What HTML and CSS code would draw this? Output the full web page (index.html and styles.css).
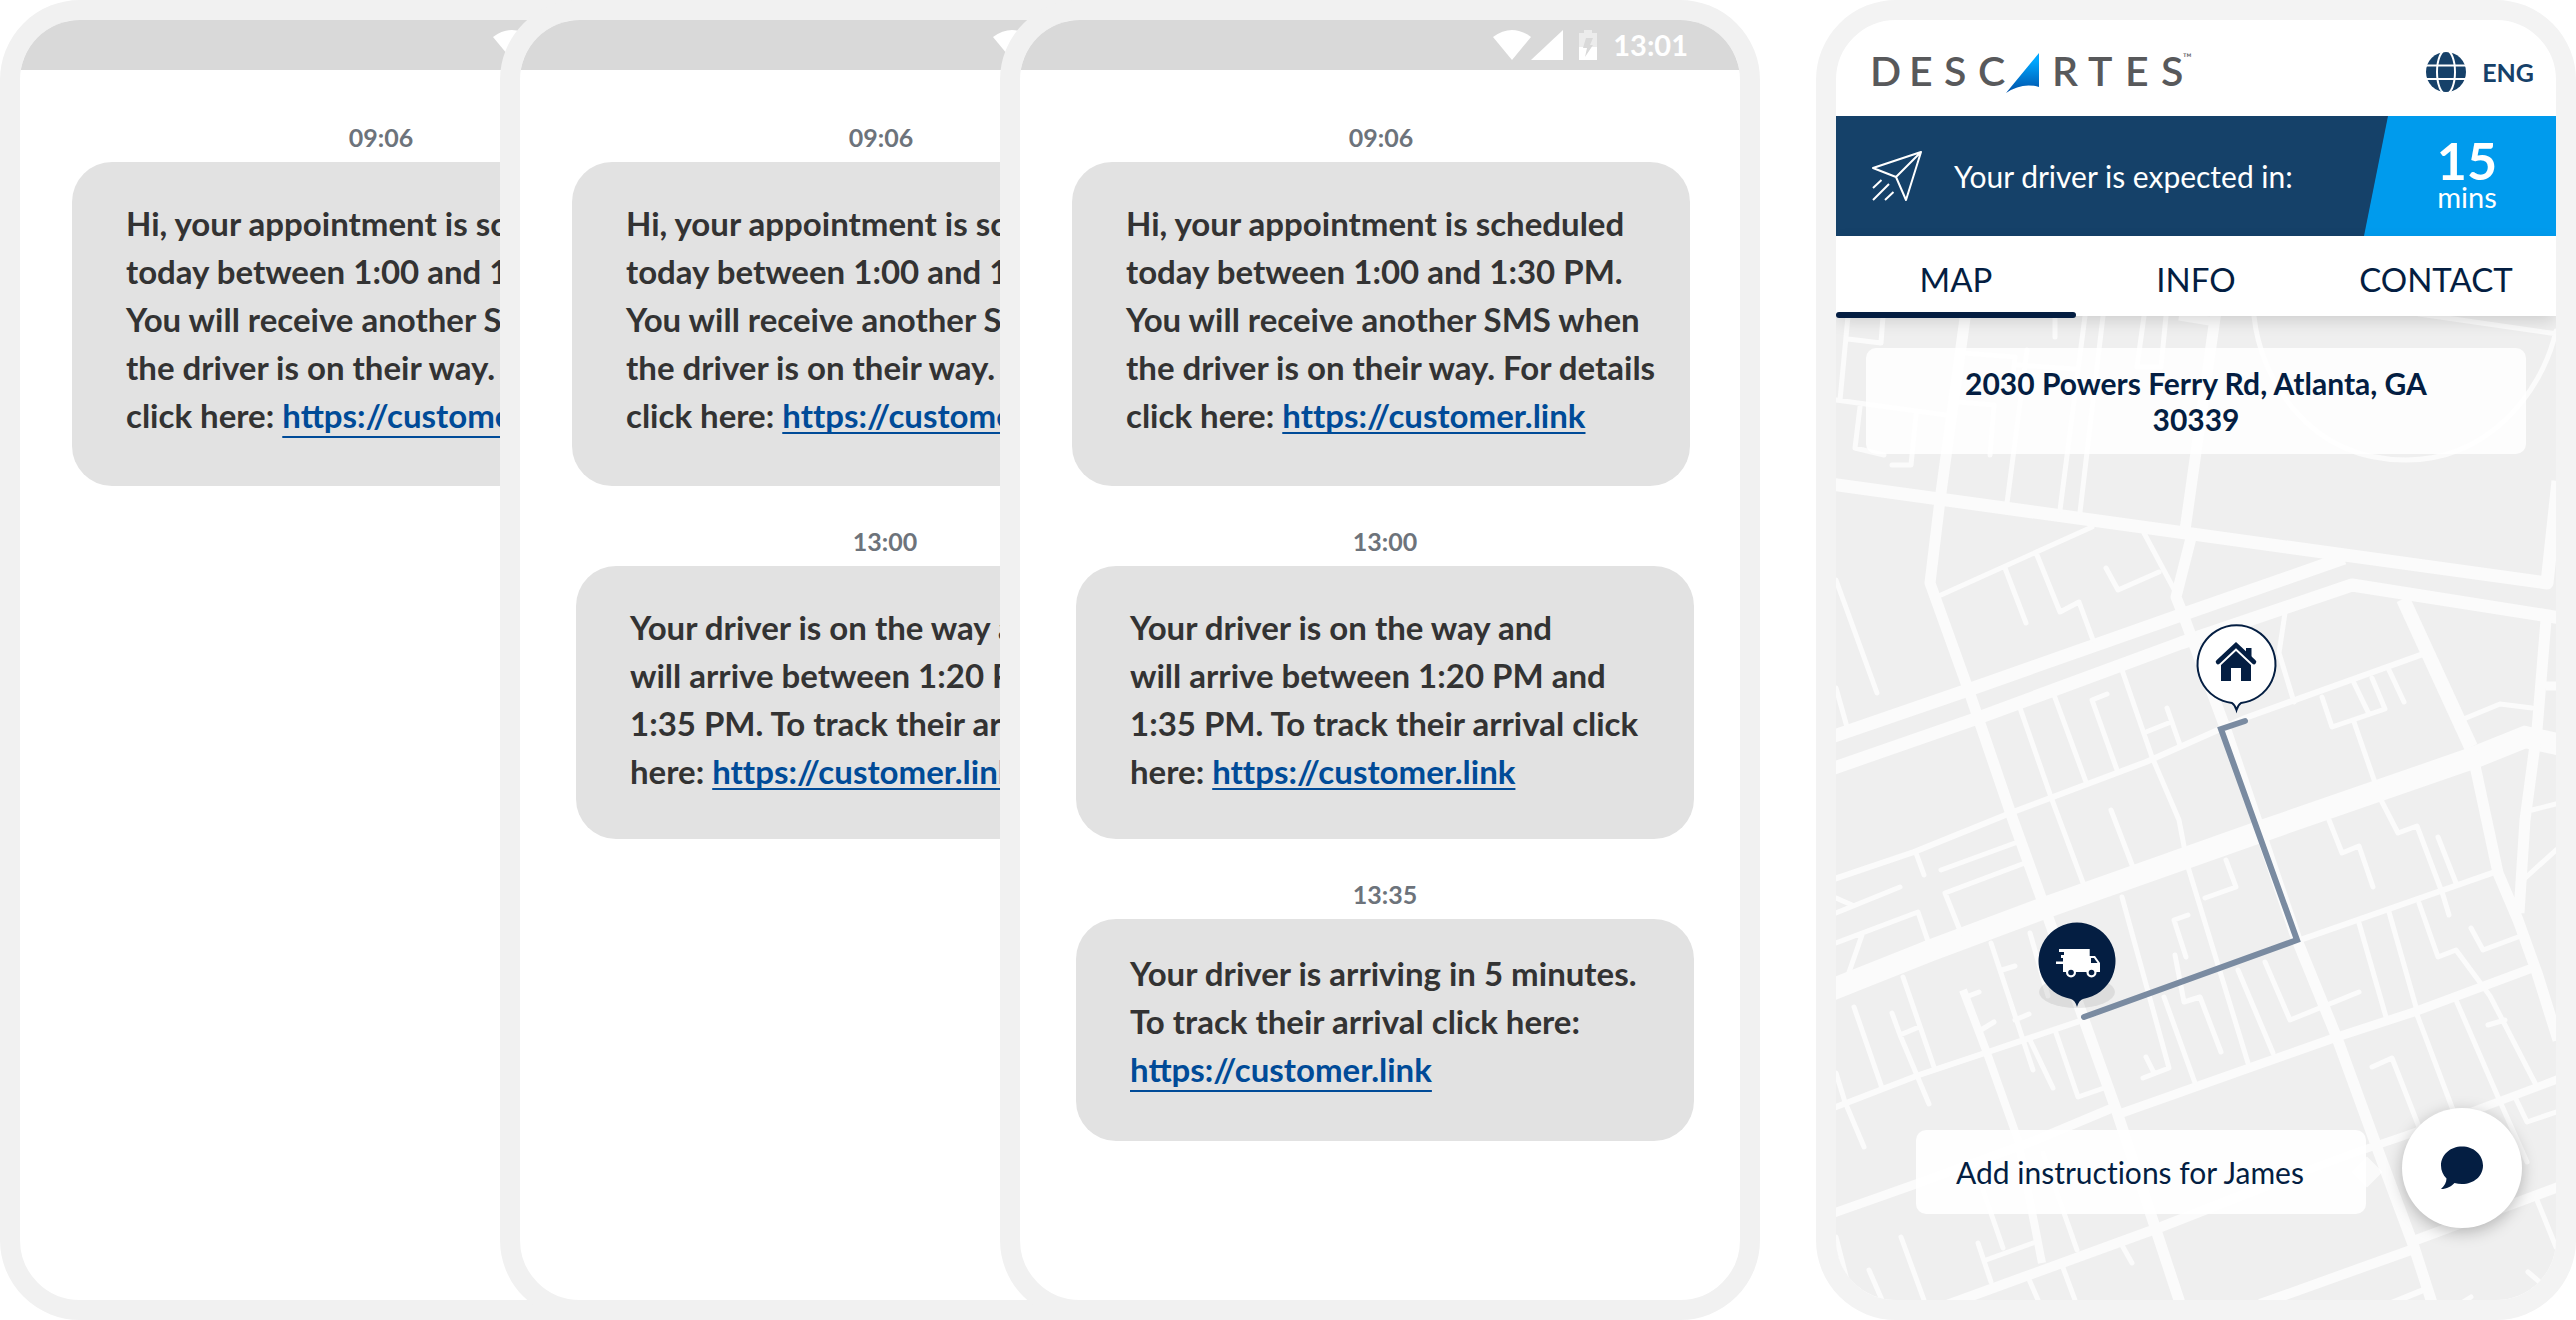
FILE: index.html
```html
<!DOCTYPE html>
<html lang="en">
<head>
<meta charset="utf-8">
<meta name="viewport" content="width=device-width, initial-scale=1">
<title>Descartes - Track your delivery</title>
<link rel="stylesheet" href="styles.css">
</head>
<body>
  <svg class="defs" width="0" height="0" aria-hidden="true">
    <symbol id="status-icons" viewBox="0 0 104 30">
      <path fill="#fff" d="M0 7 Q19 -7 38 7 L19 30 Z"/>
      <path fill="#fff" d="M38 30 L70 0 V30 Z"/>
      <path fill="#ececec" d="M91 0 H99 V3 H104 V17 H86 V3 H91 Z"/>
      <path fill="#fff" d="M86 17 H104 V30 H86 Z"/>
      <path fill="#d9d9d9" d="M93 8 H100 L97 15 H100 L92 27 L94 18 H90 Z"/>
    </symbol>
  </svg>

  <main class="stage">
    <section class="phone">
      <div class="status-bar">
        <svg class="status-icons"><use href="#status-icons"/></svg>
        <span>13:01</span>
      </div>
      <div class="thread">
        <article class="message">
          <time>09:06</time>
          <p class="bubble">Hi, your appointment is scheduled<br>today between 1:00 and 1:30 PM.<br>You will receive another SMS when<br>the driver is on their way. For details<br>click here: <a class="low" href="#">https://customer.link</a></p>
        </article>
      </div>
    </section>

    <section class="phone stacked">
      <div class="status-bar">
        <svg class="status-icons"><use href="#status-icons"/></svg>
        <span>13:01</span>
      </div>
      <div class="thread">
        <article class="message">
          <time>09:06</time>
          <p class="bubble">Hi, your appointment is scheduled<br>today between 1:00 and 1:30 PM.<br>You will receive another SMS when<br>the driver is on their way. For details<br>click here: <a href="#">https://customer.link</a></p>
        </article>
        <article class="message reply">
          <time>13:00</time>
          <p class="bubble">Your driver is on the way and<br>will arrive between 1:20 PM and<br>1:35 PM. To track their arrival click<br>here: <a href="#">https://customer.link</a></p>
        </article>
      </div>
    </section>

    <section class="phone stacked">
      <div class="status-bar">
        <svg class="status-icons"><use href="#status-icons"/></svg>
        <span>13:01</span>
      </div>
      <div class="thread">
        <article class="message">
          <time>09:06</time>
          <p class="bubble">Hi, your appointment is scheduled<br>today between 1:00 and 1:30 PM.<br>You will receive another SMS when<br>the driver is on their way. For details<br>click here: <a href="#">https://customer.link</a></p>
        </article>
        <article class="message reply">
          <time>13:00</time>
          <p class="bubble">Your driver is on the way and<br>will arrive between 1:20 PM and<br>1:35 PM. To track their arrival click<br>here: <a href="#">https://customer.link</a></p>
        </article>
        <article class="message reply">
          <time>13:35</time>
          <p class="bubble short">Your driver is arriving in 5 minutes.<br>To track their arrival click here:<br><a class="low" href="#">https://customer.link</a></p>
        </article>
      </div>
    </section>

    <section class="phone tracker">
      <header class="brand">
        <svg class="logo" viewBox="0 0 324 44" role="img" aria-label="Descartes">
          <defs>
            <linearGradient id="sail" x1="0" y1="0" x2="0" y2="1">
              <stop offset="0.2" stop-color="#00a7ff"/>
              <stop offset="1" stop-color="#0050a8"/>
            </linearGradient>
          </defs>
          <text class="logo-text" y="36" x="-2 37 72 106 180 216 253 289">DESCRTES</text>
          <path fill="url(#sail)" d="M167 3 V37 Q150 32 134 43 Z"/>
          <text class="logo-tm" x="311" y="12">™</text>
        </svg>
        <button class="lang" type="button">
          <svg width="40" height="40" viewBox="0 0 40 40" aria-hidden="true">
            <circle cx="20" cy="20" r="20" fill="#164169"/>
            <g fill="none" stroke="#fff" stroke-width="2">
              <ellipse cx="20" cy="20" rx="9" ry="22"/>
              <path d="M0 13.5 H40 M0 27 H40"/>
            </g>
          </svg>
          ENG
        </button>
      </header>

      <div class="banner">
        <svg width="50" height="50" viewBox="0 0 50 50" fill="none" stroke="#fff" stroke-width="2" stroke-linejoin="round" aria-hidden="true">
          <path d="M49 1 L1 17 L24 26 L34 49 Z M49 1 L24 26 M9.500 29 L1 37 M17 33 L1 49 M21.500 41 L13 49"/>
        </svg>
        <p class="banner-text">Your driver is expected in:</p>
        <div class="eta"><strong>15</strong><span>mins</span></div>
      </div>

      <nav class="tabs">
        <button class="tab active" type="button">MAP</button>
        <button class="tab" type="button">INFO</button>
        <button class="tab" type="button">CONTACT</button>
      </nav>

      <div class="map">
        <svg class="map-canvas" viewBox="0 0 720 984" preserveAspectRatio="xMidYMid slice" aria-hidden="true">
          <g fill="none" stroke="#fbfbfb" stroke-linejoin="round">
            <!-- main roads -->
            <path stroke-width="22" stroke-linejoin="miter" d="M730 430 L689 421 L637 442 L429 514 L211 591 L93 635 L-5 674"/>
            <path stroke-width="13" d="M-5 168 L711 267 L722 165 M508 242 L345 299 L132 374 L-5 421 M725 302 L516 269 L345 327 L142 402 L-5 453"/>
            <path stroke-width="11" d="M130 -5 L104 184 L94 267 L135 381 L177 504 L206 584 L248 704 L281 796 L320 914 L345 990"/>
            <path stroke-width="11" d="M380 -5 L349 214 M355 222 L340 281 L348 301 L390 414 L461 624 L501 722 L543 837 L578 931 L597 990"/>
            <path stroke-width="14" d="M567 283 L635 431"/>
            <path stroke-width="11" d="M635 431 L662 557 L682 604 L701 657 L722 724 M710 304 L701 414 L689 504 L683 597"/>
            <path stroke-width="9" d="M343 0 L380 6 M710 370 H725 M699 651 L578 696 L498 722 L286 797 M-5 898 L80 868 L195 826 L281 790"/>
            <path stroke-width="10" d="M108 990 L325 911 L440 866 M424 988 L575 934 M580 924 L725 870"/>
            <path stroke-width="8" d="M127 674 L151 737 L182 824 L206 947 M440 866 L518 837 L568 820 L640 794 L725 762"/>
            <path stroke-width="6" d="M590 337 L409 402 L310 446 L177 496 L78 536 L-5 564 M-5 793 L83 759 L152 736 L250 703 M659 556 L464 624 M553 988 L590 973"/>
            <!-- side streets -->
            <path stroke-width="5" stroke-linecap="round" d="M105 279 L256 211 M169 252 L190 307 M201 239 L224 296 L243 286 L257 324 M308 217 L340 277 M270 252 L282 274 L323 256
              M12 0 L4 84 M12 23 L45 27 L47 0 M0 84 L110 99 M24 91 L19 132 L48 139 M80 99 L75 149 L56 149 M219 0 V21 M249 0 L224 194 M267 0 L244 196
              M308 0 L301 51 L325 51 L330 0 M127 37 L179 41 L177 60 M191 34 L171 187 M182 49 L239 53 M122 86 L158 89 L154 139
              M418 0 C424 60 470 144 570 144 C650 144 705 80 720 15
              M583 -2 L722 18 M0 264 L41 377 M0 372 L11 411 M630 402 L664 388 L696 392 M696 494 L720 488
              M449 297 L443 337 L458 386 M486 381 L496 411 L549 393 L536 362 M518 367 L532 396 M553 354 L568 386
              M518 406 L545 484 L562 517 L581 510 L607 579 L613 599 M286 354 L316 441 L343 504 L352 551 L412 747
              M310 416 L335 406 M331 392 L344 429 M184 392 L215 481 L249 572 M218 379 L250 466 M271 378 L256 384 L281 454 M275 494 L298 554"/>
            <path stroke-width="5" stroke-linecap="round" d="M80 537 L88 559 M105 554 L179 527 M189 547 L109 577 L125 617 M0 597 L64 571 M0 582 L16 589 M0 627 L82 596 L94 631 M26 619 L12 659
              M67 661 L98 751 M18 691 L46 772 M56 697 L64 719 L83 711 M64 719 L93 788 M0 757 L9 786 L28 831 M155 627 L197 754 M143 676 L130 681 M145 714 L158 706
              M166 654 L179 650 M179 704 L193 698 M194 617 L212 680 M219 714 L242 781 L268 772 M194 724 L217 772 M286 581 L333 752 L307 762 M310 741 L318 757
              M352 599 L338 604 L350 641 M339 639 L348 686 L364 681 L385 736 M390 544 L400 571 L369 582 M402 654 L437 737 M429 646 L454 704 L523 676 M328 681 L359 767
              M523 607 L550 701 M553 596 L580 691 M583 587 L602 641 L620 634 L654 680 L699 767 M635 612 L647 634 L682 621 M620 684 L662 781 L691 846
              M536 751 L556 742 L583 811 M580 696 L617 794 M652 709 L669 704 M679 781 L691 806 L720 796 M493 504 L506 537 L523 530 L537 571 M602 521 L620 567
              M720 534 L687 564 M65 921 L88 984 M33 954 L46 984 M0 921 L11 964 M142 927 L155 966 M150 944 L197 927 M147 874 L167 932 M192 961 L202 984
              M226 949 L239 984 M283 924 L296 947 M207 837 L241 934 M692 956 L706 968 M701 884 L720 931 M627 986 L635 981"/>
          </g>

          <path fill="none" stroke="#7a8ba1" stroke-width="6" stroke-linecap="round" d="M409 405 L385 413 L461 624 L248 701"/>

          <!-- home pin -->
          <path fill="#fff" stroke="#041e42" stroke-width="2" d="M396 387 A39 39 0 1 1 405 387 Q402 389 400.500 394 Q399 389 396 387 Z"/>
          <path fill="#041e42" d="M385 365 V349 L400 335 L415 349 V365 H405 V352 H395 V365 Z M410 332 H415.500 V344 L410 339 Z"/>
          <path fill="none" stroke="#041e42" stroke-width="4.500" stroke-linecap="round" d="M382 346 L400 329 L418 346"/>

          <!-- truck pin -->
          <ellipse cx="241" cy="676" rx="38" ry="16" fill="#000" fill-opacity="0.080"/>
          <path fill="#041e42" d="M235 683 A38.500 38.500 0 1 1 247 683 Q243 684 241 691 Q239 684 235 683 Z"/>
          <g fill="#fff">
            <path d="M223 633 H253.700 V640 H259 L264 647 V656 H227 V648 H220 V645.500 H227 V642 H225 V639 H228 V636 H223 Z"/>
            <circle cx="235" cy="656.500" r="5"/>
            <circle cx="255.500" cy="656.500" r="5"/>
          </g>
          <g fill="#041e42">
            <path d="M255 642 H258 L261.500 647 H255 Z"/>
            <circle cx="235" cy="656.500" r="2.800"/>
            <circle cx="255.500" cy="656.500" r="2.800"/>
          </g>
        </svg>

        <address class="address">2030 Powers Ferry Rd, Atlanta, GA<br>30339</address>

        <div class="chat">
          <label class="hint" for="chat-button">Add instructions for James</label>
          <button class="fab" id="chat-button" type="button">
            <svg width="44" height="44" viewBox="0 0 44 44" aria-hidden="true">
              <path fill="#041e42" d="M22 0.500 C33.500 0.500 43 8.500 43 19.500 C43 30 34 38 22 38 C19.500 38 17 37.700 14.500 37 C11 40.500 7 43 1 43 C4.500 39.500 6.500 36.500 6.500 32.500 C3 29 1 24.500 1 19.500 C1 8.500 10.500 0.500 22 0.500 Z"/>
            </svg>
          </button>
        </div>
      </div>
    </section>
  </main>
</body>
</html>
```

FILE: styles.css
```css
* {
  box-sizing: border-box;
}
body {
  margin: 0;
  background-color: #fff;
  font-family: 'Lato', sans-serif;
  color: #333;
}
button {
  font-family: inherit;
  border: none;
  background: none;
  padding: 0;
  cursor: pointer;
}
.defs {
  position: absolute;
}
.stage {
  display: flex;
  min-height: 100vh;
}

/* phone frames */
.phone {
  flex: 1 1 0;
  min-width: 0;
  display: flex;
  flex-direction: column;
  border: 20px solid #f1f1f1;
  border-radius: 80px;
  background-color: #fff;
  overflow: hidden;
  z-index: 1;
}
.stacked {
  margin-left: -260px;
}
.tracker {
  margin-left: 56px;
  border-color: #f3f3f3;
  font-variant-ligatures: none;
}
.status-bar {
  display: flex;
  align-items: center;
  justify-content: flex-end;
  gap: 16px;
  height: 50px;
  padding-right: 52px;
  background-color: #d9d9d9;
  color: #fff;
  font-size: 29px;
  font-weight: 700;
  line-height: 48px;
}
.status-icons {
  width: 104px;
  height: 30px;
}

/* messages */
.thread {
  padding: 52px 50px 0 52px;
}
.message {
  margin-bottom: 40px;
}
.message time {
  display: block;
  margin-bottom: 10px;
  color: #6d737b;
  font-size: 25px;
  font-weight: 700;
  line-height: 30px;
  text-align: center;
}
.reply {
  margin-left: 4px;
  margin-right: -4px;
}
.bubble {
  margin: 0;
  padding: 37px 0 47px 54px;
  border-radius: 40px;
  background-color: #e2e2e2;
  font-size: 33px;
  font-weight: 700;
  line-height: 48px;
  white-space: nowrap;
}
.reply .bubble {
  padding-bottom: 44px;
}
.reply .short {
  padding-top: 30px;
  padding-bottom: 48px;
}
.bubble a {
  color: #004b98;
  font-variant-ligatures: none;
  text-decoration-thickness: 2px;
  text-decoration-skip-ink: none;
  text-underline-offset: 4px;
}
.bubble .low {
  font-variant-ligatures: normal;
  text-underline-offset: 8px;
}

/* tracker header */
.brand {
  display: flex;
  align-items: center;
  justify-content: space-between;
  height: 96px;
  padding: 8px 22px 0 36px;
}
.logo {
  width: 324px;
  height: 44px;
}
.logo-text {
  fill: #58595b;
  font-size: 41px;
  font-weight: 600;
}
.logo-tm {
  fill: #58595b;
  font-size: 12px;
}
.lang {
  display: flex;
  align-items: center;
  gap: 16px;
  color: #164169;
  font-size: 25px;
  font-weight: 700;
}
.banner {
  display: flex;
  align-items: center;
  height: 120px;
  padding-left: 36px;
  background-color: #154169;
  color: #fff;
}
.banner-text {
  flex: 1;
  margin: 0 0 0 32px;
  font-size: 30px;
}
.eta {
  display: flex;
  flex-direction: column;
  align-items: center;
  justify-content: center;
  width: 192px;
  height: 100%;
  padding: 0 0 8px 14px;
  background-color: #009bed;
  clip-path: polygon(24px 0, 100% 0, 100% 100%, 0 100%);
}
.eta strong {
  font-size: 52px;
  line-height: 50px;
}
.eta span {
  font-size: 29px;
  line-height: 24px;
}
.tabs {
  display: flex;
  position: relative;
  z-index: 1;
  height: 80px;
  background-color: #fff;
  box-shadow: 0 6px 16px -2px rgba(0, 0, 0, 0.15);
}
.tab {
  flex: 1;
  position: relative;
  padding-top: 6px;
  color: #041e42;
  font-size: 33px;
}
.active::after {
  content: "";
  position: absolute;
  left: 0;
  right: 0;
  bottom: -2px;
  height: 6px;
  border-radius: 3px;
  background-color: #041e42;
}

/* map */
.map {
  flex: 1;
  position: relative;
  display: flex;
  flex-direction: column;
  justify-content: space-between;
  padding: 32px 30px 72px;
  background-color: #efefef;
}
.map-canvas {
  position: absolute;
  top: 0;
  left: 0;
  width: 100%;
  height: 100%;
}
.address {
  position: relative;
  padding: 17px 60px;
  border-radius: 10px;
  background-color: rgba(255, 255, 255, 0.85);
  color: #041e42;
  font-size: 30px;
  font-style: normal;
  font-weight: 700;
  line-height: 36px;
  text-align: center;
}
.chat {
  position: relative;
  display: flex;
  align-items: center;
  justify-content: flex-end;
  gap: 36px;
  padding-right: 4px;
}
.hint {
  position: relative;
  width: 450px;
  margin-top: 8px;
  padding: 0 40px;
  border-radius: 10px;
  background-color: rgba(255, 255, 255, 0.9);
  color: #041e42;
  font-size: 30px;
  line-height: 84px;
  white-space: nowrap;
}
.hint::after {
  content: "";
  position: absolute;
  top: 31px;
  right: -12px;
  width: 22px;
  height: 22px;
  background-color: rgba(255, 255, 255, 0.7);
  transform: rotate(45deg);
}
.fab {
  display: flex;
  align-items: center;
  justify-content: center;
  width: 120px;
  height: 120px;
  border-radius: 50%;
  background-color: #fff;
  box-shadow: 0 4px 16px rgba(0, 0, 0, 0.25);
}
```
